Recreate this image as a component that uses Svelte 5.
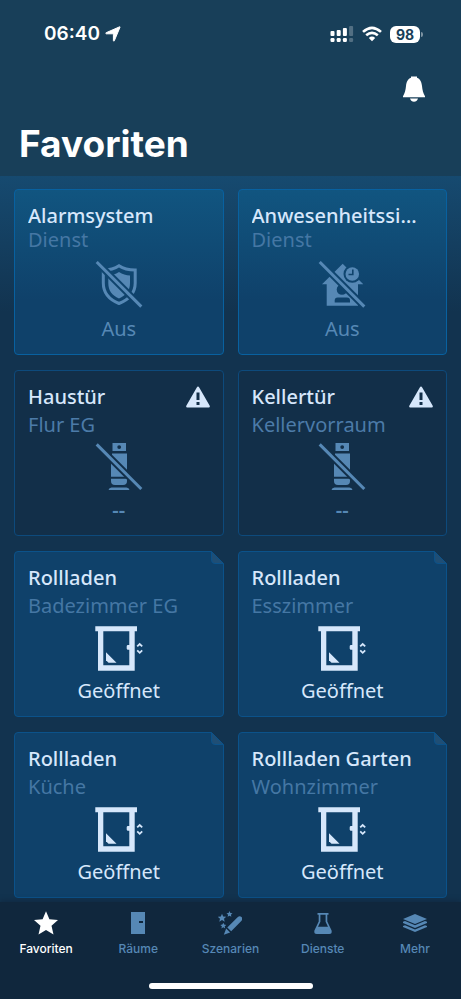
<script>
  const tiles = [
    { title: 'Alarmsystem', sub: 'Dienst', icon: 'shield', state: 'Aus', kind: 'service' },
    { title: 'Anwesenheitssimulation', sub: 'Dienst', icon: 'presence', state: 'Aus', kind: 'service' },
    { title: 'Haustür', sub: 'Flur EG', icon: 'contact', state: '--', kind: 'offline' },
    { title: 'Kellertür', sub: 'Kellervorraum', icon: 'contact', state: '--', kind: 'offline' },
    { title: 'Rollladen', sub: 'Badezimmer EG', icon: 'shutter', state: 'Geöffnet', kind: 'device' },
    { title: 'Rollladen', sub: 'Esszimmer', icon: 'shutter', state: 'Geöffnet', kind: 'device' },
    { title: 'Rollladen', sub: 'Küche', icon: 'shutter', state: 'Geöffnet', kind: 'device' },
    { title: 'Rollladen Garten', sub: 'Wohnzimmer', icon: 'shutter', state: 'Geöffnet', kind: 'device' },
  ];

  const tabs = ['Favoriten', 'Räume', 'Szenarien', 'Dienste', 'Mehr'];
  let active = $state('Favoriten');
</script>

{#snippet tileIcon(name)}
  <svg class="icon" viewBox="0 0 48 48" aria-hidden="true">
    {#if name === 'shield'}
      <g mask="url(#slash-gap)">
        <path d="M24 4.7C19.5 7.8 14 9 8.3 9V22C8.3 31.5 14 38.5 24 42.5C34 38.5 40.2 31.5 40.2 22V9C34 9 28.5 7.8 24 4.7Z" fill="none" stroke="currentColor" stroke-width="3" />
        <path d="M24 11C20.5 13.3 17 14.2 13.3 14.5V22C13.3 29.5 17 34.5 24 37.5C31 34.5 35 29.5 35 22V14.5C31 14.2 27.5 13.3 24 11Z" fill="currentColor" />
      </g>
      <path d="M1.7 1L46.3 45.6" stroke="currentColor" stroke-width="3" />
    {:else if name === 'presence'}
      <g mask="url(#slash-gap)">
        <path d="M24.7 2.7L4 23.3H8.7V44.7H40V23.3H45.3Z" fill="currentColor" mask="url(#house-holes)" />
        <circle cx="34.3" cy="13" r="6.8" fill="currentColor" />
        <path d="M34.8 8.5V13.5H30.5" fill="none" stroke="var(--hole)" stroke-width="1.6" />
      </g>
      <path d="M1.7 1L46.3 45.6" stroke="currentColor" stroke-width="3" />
    {:else if name === 'contact'}
      <g mask="url(#slash-gap-low)" fill="currentColor">
        <path fill-rule="evenodd" d="M17.5 1H31V9H17.5ZM24.2 3.2A1.9 1.9 0 1 0 24.2 7A1.9 1.9 0 1 0 24.2 3.2Z" />
        <path d="M17 11.5H32V34.7H16V16H17Z" />
        <path d="M16 36.7H32V39Q32 43 28 43H20Q16 43 16 39Z" />
        <path d="M13.5 48Q14 45.5 16.5 45.5H31.5Q34 45.5 34.5 48Z" />
      </g>
      <path d="M1.7 2.4L46.3 47" stroke="currentColor" stroke-width="3" />
    {:else}
      <path d="M0.3 3.3H42V8.3H39.7V47.7H3V8.3H0.3ZM8.3 8.3V42.3H34.3V26.7H33Q31.7 26.7 31.7 25.5V23.2Q31.7 22 33 22H34.3V8.3Z" fill="currentColor" fill-rule="evenodd" />
      <path d="M11 29.3L21.5 39.7H13.5L11 37.2Z" fill="currentColor" />
      <path d="M42.2 23.4L44.7 21L47.2 23.4M42.2 27.4L44.7 29.8L47.2 27.4" fill="none" stroke="currentColor" stroke-width="1.8" />
    {/if}
  </svg>
{/snippet}

<!-- cut-outs shared by the tile icons -->
<svg class="defs" width="0" height="0" aria-hidden="true">
  <mask id="slash-gap" maskUnits="userSpaceOnUse" x="0" y="0" width="48" height="48">
    <rect width="48" height="48" fill="white" />
    <path d="M-3 -3.7L51 50.3" stroke="black" stroke-width="7" />
  </mask>
  <mask id="slash-gap-low" maskUnits="userSpaceOnUse" x="0" y="0" width="48" height="48">
    <rect width="48" height="48" fill="white" />
    <path d="M-3 -2.3L51 51.7" stroke="black" stroke-width="7" />
  </mask>
  <mask id="house-holes" maskUnits="userSpaceOnUse" x="0" y="0" width="48" height="48">
    <rect width="48" height="48" fill="white" />
    <circle cx="34.3" cy="13" r="8.8" fill="black" />
    <circle cx="24" cy="28.5" r="5.3" fill="black" />
    <path d="M16.7 41.5V39.5Q16.7 36.5 19.7 36.5H29Q32 36.5 32 39.5V41.5Z" fill="black" />
  </mask>
</svg>

<div class="app">
  <header>
    <div class="status">
      <span class="time">06:40</span>
      <svg class="loc" width="16" height="16" viewBox="0 0 16 16" aria-hidden="true">
        <path d="M15 1.2L9.3 14.8Q8.7 15.6 8.4 14.6V8.2Q8.4 7.8 8 7.8H1.3Q0.2 7.4 1.2 6.7L14.6 0.8Q15.2 0.7 15 1.2Z" fill="currentColor" stroke="currentColor" />
      </svg>
      <svg class="signal" width="24" height="18" viewBox="0 0 24 18" aria-hidden="true">
        <g fill="currentColor">
          <rect x="0.5" y="6" width="4" height="5" rx="1" /><rect x="6.7" y="5" width="4" height="6" rx="1" /><rect x="12.9" y="3" width="4" height="8" rx="1" />
          <rect x="0.5" y="13" width="4" height="4" rx="1.2" /><rect x="6.7" y="13" width="4" height="4" rx="1.2" /><rect x="12.9" y="13" width="4" height="4" rx="1.2" />
          <g opacity="0.25"><rect x="19.1" y="1" width="4" height="10" rx="1" /><rect x="19.1" y="13" width="4" height="4" rx="1.2" /></g>
        </g>
      </svg>
      <svg class="wifi" width="20" height="16" viewBox="0 0 20 16" aria-hidden="true">
        <g fill="none" stroke="currentColor" stroke-width="2.6">
          <path d="M1 5.9Q10 -2.3 19 5.9" /><path d="M4.2 9.3Q10 4.3 15.8 9.3" />
        </g>
        <path d="M6.8 11.9Q10 9.2 13.2 11.9L10 15.3Z" fill="currentColor" />
      </svg>
      <span class="battery">98</span>
    </div>
    <button class="bell" aria-label="Benachrichtigungen">
      <svg width="22" height="26" viewBox="0 0 22 26" aria-hidden="true">
        <path d="M8 0.5H14V1.7C17.5 3 18.5 6 19 10C19.4 14.5 20.3 17.5 22 20.2V21.2H0V20.2C1.7 17.5 2.6 14.5 3 10C3.5 6 4.5 3 8 1.7ZM7 22.6H15Q13.8 25.8 11 25.8Q8.2 25.8 7 22.6Z" fill="currentColor" />
      </svg>
    </button>
    <h1>Favoriten</h1>
  </header>

  <main>
    {#each tiles as tile}
      <article class="tile {tile.kind}">
        <div class="head">
          <h2>{tile.title}</h2>
          {#if tile.kind === 'offline'}
            <svg width="24" height="22" viewBox="0 0 24 22" aria-label="Warnung" role="img">
              <path fill-rule="evenodd" d="M12 0.5Q12.7 0.5 13.2 1.4L23.7 19.7Q24.3 21.5 22.7 21.5H1.3Q-0.3 21.5 0.3 19.7L10.8 1.4Q11.3 0.5 12 0.5ZM10.5 6.5V14H13.5V6.5ZM10.5 16V19H13.5V16Z" fill="currentColor" />
            </svg>
          {/if}
        </div>
        <p class="sub">{tile.sub}</p>
        {@render tileIcon(tile.icon)}
        <p class="state">{tile.state}</p>
        {#if tile.kind === 'device'}
          <svg class="fold" width="13" height="13" viewBox="0 0 13 13" aria-hidden="true">
            <path d="M0 0H13V13Z" fill="#12334f" />
            <path d="M0.5 0.5V9Q0.5 12.5 4 12.5H12.5Z" fill="#1f4e75" stroke="#0b528a" />
          </svg>
        {/if}
      </article>
    {/each}
  </main>

  <nav>
    <div class="tabs">
      {#each tabs as tab}
        <button class="tab" class:active={active === tab} onclick={() => (active = tab)}>
          <svg width="24" height="24" viewBox="0 0 24 24" fill="currentColor" aria-hidden="true">
            {#if tab === 'Favoriten'}
              <path d="M12 0.2L15.4 8.2L24 9L17.5 14.8L19.5 23.5L12 19L4.5 23.5L6.5 14.8L0 9L8.6 8.2Z" />
            {:else if tab === 'Räume'}
              <path fill-rule="evenodd" d="M5 1H19V23H5ZM13 10V12H17V10Z" />
            {:else if tab === 'Szenarien'}
              <path d="M4 2.7L5.2 5.4L8.2 5.7L6 7.7L6.7 10.7L4 9.1L1.3 10.7L2 7.7L-0.2 5.7L2.8 5.4ZM11.5 0L12.4 2L14.5 2.2L12.9 3.7L13.4 5.8L11.5 4.7L9.6 5.8L10.1 3.7L8.5 2.2L10.6 2ZM5.3 11.7L6.2 13.6L8.3 13.9L6.7 15.3L7.2 17.4L5.3 16.3L3.4 17.4L3.9 15.3L2.3 13.9L4.4 13.6Z" />
              <path d="M19.6 6.2Q21.8 4.3 23.5 6.1Q25.2 8 23.3 10.1L13.2 20.3L9.3 16.4ZM8.2 17.5L12.1 21.4L5.8 23.8Z" />
            {:else if tab === 'Dienste'}
              <path fill-rule="evenodd" d="M6.5 2H17.5V3.8H16.3V10.5L20.6 19.5Q21.3 23 18.3 23H5.7Q2.7 23 3.4 19.5L7.7 10.5V3.8H6.5ZM9.4 3.8V10.8L7 15.7H17L14.6 10.8V3.8Z" />
            {:else}
              <path d="M12 3L24 8L12 13L0 8ZM0 10.8L2 10L12 14.2L22 10L24 10.8V12L12 17L0 12ZM0 15L2 14.2L12 18.4L22 14.2L24 15V16L12 21L0 16Z" />
            {/if}
          </svg>
          <span>{tab}</span>
        </button>
      {/each}
    </div>
    <div class="home"></div>
  </nav>
</div>

<style>
  :global(body) { margin:0; background:#12334f; }
  * { box-sizing:border-box; }
  h1, h2, p { margin:0; }
  button { padding:0; border:none; background:none; color:inherit; font:inherit; cursor:pointer; }
  svg { display:block; flex:none; }
  .defs { position:absolute; }

  .app { min-height:100vh; display:flex; flex-direction:column; color:#fff; font-family:Inter, "Liberation Sans", sans-serif; }

  header { display:flex; flex-direction:column; padding-bottom:8px; background:#183f59; }
  .status { display:flex; align-items:center; padding:20px 38px 0 44px; }
  .time { font-size:19px; line-height:28px; font-weight:600; }
  .loc { margin-left:5px; }
  .signal { margin-left:auto; }
  .wifi { margin:0 8px; }
  .battery { position:relative; width:30px; margin-right:3px; border-radius:6px; background:#fff; color:#183f59; font-size:14px; line-height:17px; font-weight:700; text-align:center; }
  .battery::after { content:''; position:absolute; left:31px; top:6px; width:2px; height:5px; border-radius:0 2px 2px 0; background:#7c93a2; }
  .bell { align-self:flex-end; margin:28px 36px 0 0; }
  h1 { margin:18px 0 0 19px; font-size:37px; line-height:48px; font-weight:700; }

  main { display:grid; grid-template-columns:repeat(2, minmax(0, 1fr)); gap:15px 14px; padding:13px 14px 4px; background:linear-gradient(#164a70, #12334f 136px); }
  .tile { position:relative; display:flex; flex-direction:column; padding:12px 13px 11px; border:1px solid #0b528a; border-radius:4px; background:#0f416a; color:#d6e7fb; font-family:"Noto Sans", "Open Sans", sans-serif; font-size:20px; line-height:28px; }
  .service { --hole:#10436c; border-color:#0861a0; background:linear-gradient(#115580, #0f416a 110px); }
  .offline { border-color:#0d4a7c; background:#122f49; }
  .head { display:flex; align-items:center; gap:8px; }
  h2 { flex:1; overflow:hidden; text-overflow:ellipsis; white-space:nowrap; font-size:20px; font-weight:500; }
  .sub { color:#4577a4; }
  .service .sub { margin-bottom:8px; line-height:20px; }
  .icon { align-self:center; width:48px; height:48px; margin:3px 0 6px; }
  .state { text-align:center; }
  .service .icon, .service .state, .offline .icon, .offline .state { color:#5688b5; }
  .offline .sub { color:#4c7ba8; }
  .offline .state { font-weight:600; }
  .fold { position:absolute; top:-1px; right:-1px; }

  nav { margin-top:auto; padding:9px 0 10px; background:#10273d; box-shadow:0 -2px 4px #10273d99; position:relative; }
  .tabs { display:grid; grid-template-columns:repeat(5, 1fr); }
  .tab { display:flex; flex-direction:column; align-items:center; gap:6px; color:#5688b5; font-size:12px; line-height:16px; font-weight:500; }
  .tab.active { color:#fff; }
  .home { width:164px; height:6px; margin:26px auto 0; border-radius:3px; background:#fff; }
</style>
